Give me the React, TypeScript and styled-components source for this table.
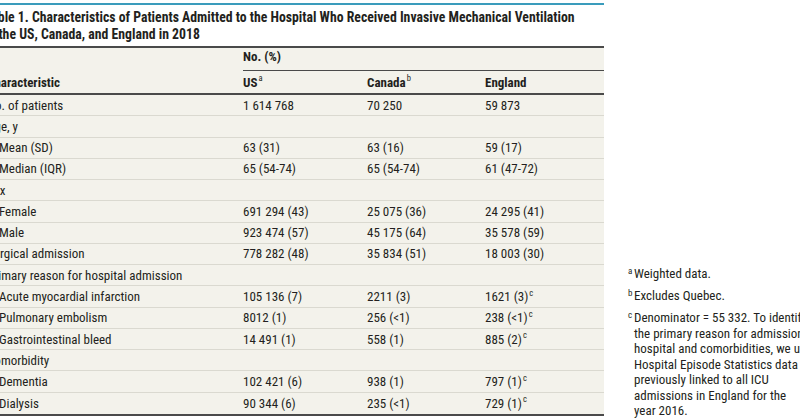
import styled, { createGlobalStyle } from 'styled-components';

const GlobalStyle = createGlobalStyle`
  html, body {
    margin: 0;
    padding: 0;
    background: #ffffff;
    overflow: hidden;
  }
  body {
    font-family: "Roboto Condensed", "DejaVu Sans Condensed", sans-serif;
    color: #231f20;
  }
`;

const Page = styled.div`
  display: flex;
  align-items: flex-start;
  gap: 24px;
  width: 800px;
  height: 419px;
  overflow: hidden;
`;

const TableBlock = styled.section`
  flex: none;
  width: 619px;
  margin-left: -15px;
`;

const Title = styled.h1`
  margin: 3px 0 0;
  padding: 3.5px 0 3.5px;
  border-top: 2px solid #3a9cbc;
  font-size: 13.75px;
  font-weight: 700;
  line-height: 17px;
  white-space: nowrap;
  color: #231f20;
`;

const Table = styled.div`
  margin-left: 2px;
  background: #f3f2eb;
  border-top: 2px solid #4a4a4a;
  border-bottom: 2px solid #4a4a4a;
  font-size: 13px;
`;

const cols = '256px 124px 118px 119px';

const HeadRow = styled.div<{ $tall?: boolean }>`
  display: grid;
  grid-template-columns: ${cols};
  height: ${(p) => (p.$tall ? '23px' : '22px')};
  border-bottom: ${(p) => (p.$tall ? 'none' : '2px solid #4a4a4a')};
  font-weight: 700;
`;

const HeadCell = styled.div<{ $span?: boolean }>`
  display: flex;
  align-items: center;
  grid-column: ${(p) => (p.$span ? '2 / 5' : 'auto')};
  border-bottom: ${(p) => (p.$span ? '1px solid #4a4a4a' : 'none')};
  padding-bottom: ${(p) => (p.$span ? '6px' : '0')};
`;

const Row = styled.div`
  display: grid;
  grid-template-columns: ${cols};
  height: 21.27px;
  box-sizing: border-box;
  border-bottom: 1px solid #dad9d0;
  &:last-child {
    border-bottom: none;
  }
`;

const Cell = styled.div<{ $indent?: boolean }>`
  display: flex;
  align-items: center;
  white-space: nowrap;
  padding-left: ${(p) => (p.$indent ? '12px' : '0')};
`;

const Sup = styled.sup`
  font-size: 8.5px;
  line-height: 0;
  vertical-align: 0;
  position: relative;
  top: -4px;
  margin-left: 1px;
  font-weight: 400;
`;

const Notes = styled.aside`
  flex: none;
  margin-top: 266px;
  font-size: 13px;
  line-height: 15.5px;
  color: #231f20;
`;

const Note = styled.p`
  margin: 0 0 6.5px;
  padding-left: 6px;
  text-indent: -6px;
  white-space: nowrap;
`;

const NoteMark = styled.span`
  display: inline-block;
  width: 6px;
  text-indent: 0;
  font-size: 9px;
  position: relative;
  top: -4px;
  line-height: 0;
`;

type RowData = { label: string; indent?: boolean; us?: string; ca?: string; en?: string; c?: boolean };

const rows: RowData[] = [
  { label: 'No. of patients', us: '1 614 768', ca: '70 250', en: '59 873' },
  { label: 'Age, y' },
  { label: 'Mean (SD)', indent: true, us: '63 (31)', ca: '63 (16)', en: '59 (17)' },
  { label: 'Median (IQR)', indent: true, us: '65 (54-74)', ca: '65 (54-74)', en: '61 (47-72)' },
  { label: 'Sex' },
  { label: 'Female', indent: true, us: '691 294 (43)', ca: '25 075 (36)', en: '24 295 (41)' },
  { label: 'Male', indent: true, us: '923 474 (57)', ca: '45 175 (64)', en: '35 578 (59)' },
  { label: 'Surgical admission', us: '778 282 (48)', ca: '35 834 (51)', en: '18 003 (30)' },
  { label: 'Primary reason for hospital admission' },
  { label: 'Acute myocardial infarction', indent: true, us: '105 136 (7)', ca: '2211 (3)', en: '1621 (3)', c: true },
  { label: 'Pulmonary embolism', indent: true, us: '8012 (1)', ca: '256 (<1)', en: '238 (<1)', c: true },
  { label: 'Gastrointestinal bleed', indent: true, us: '14 491 (1)', ca: '558 (1)', en: '885 (2)', c: true },
  { label: 'Comorbidity' },
  { label: 'Dementia', indent: true, us: '102 421 (6)', ca: '938 (1)', en: '797 (1)', c: true },
  { label: 'Dialysis', indent: true, us: '90 344 (6)', ca: '235 (<1)', en: '729 (1)', c: true },
];

export default function App() {
  return (
    <>
      <GlobalStyle />
      <Page>
        <TableBlock>
          <Title>
            Table 1. Characteristics of Patients Admitted to the Hospital Who Received Invasive Mechanical Ventilation
            <br />
            in the US, Canada, and England in 2018
          </Title>
          <Table>
            <HeadRow $tall>
              <HeadCell />
              <HeadCell $span>No. (%)</HeadCell>
            </HeadRow>
            <HeadRow>
              <HeadCell>Characteristic</HeadCell>
              <HeadCell>
                US<Sup>a</Sup>
              </HeadCell>
              <HeadCell>
                Canada<Sup>b</Sup>
              </HeadCell>
              <HeadCell>England</HeadCell>
            </HeadRow>
            {rows.map((r) => (
              <Row key={r.label}>
                <Cell $indent={r.indent}>{r.label}</Cell>
                <Cell>{r.us}</Cell>
                <Cell>{r.ca}</Cell>
                <Cell>
                  {r.en}
                  {r.c && <Sup>c</Sup>}
                </Cell>
              </Row>
            ))}
          </Table>
        </TableBlock>
        <Notes>
          <Note>
            <NoteMark>a</NoteMark>Weighted data.
          </Note>
          <Note>
            <NoteMark>b</NoteMark>Excludes Quebec.
          </Note>
          <Note>
            <NoteMark>c</NoteMark>Denominator = 55 332. To identify
            <br />
            the primary reason for admission to
            <br />
            hospital and comorbidities, we used
            <br />
            Hospital Episode Statistics data
            <br />
            previously linked to all ICU
            <br />
            admissions in England for the
            <br />
            year 2016.
          </Note>
        </Notes>
      </Page>
    </>
  );
}
